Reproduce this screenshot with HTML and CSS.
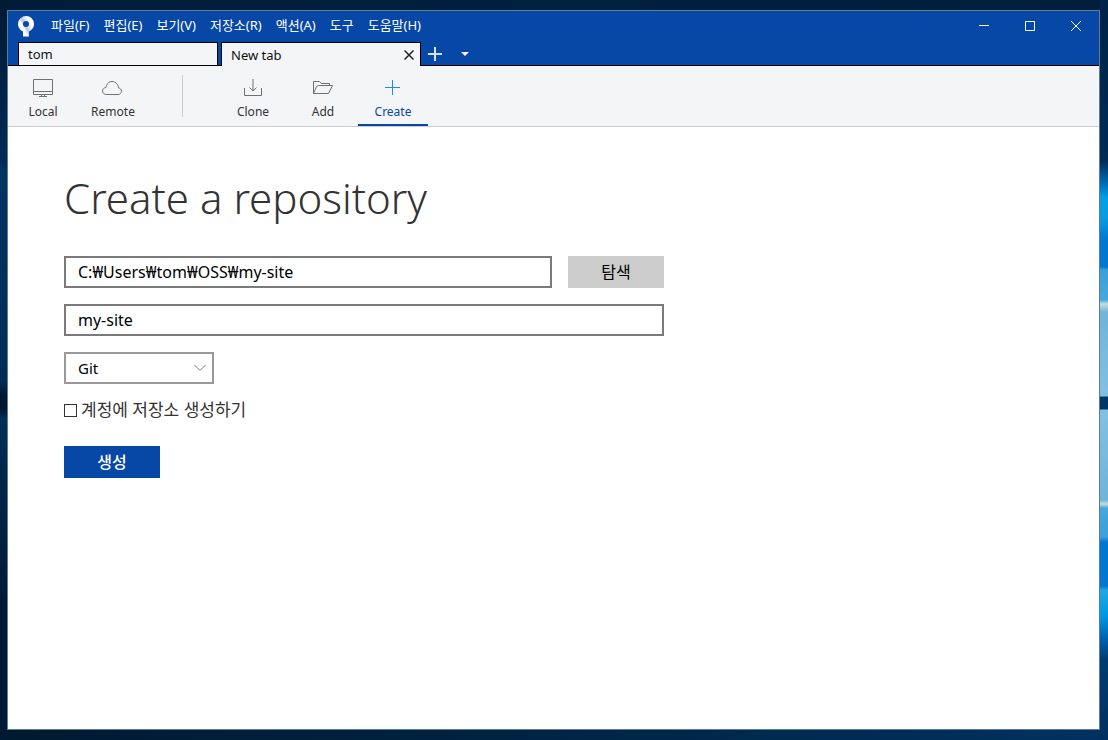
FILE: index.html
```
<!DOCTYPE html>
<html lang="ko">
<head>
    <meta charset="UTF-8">
    <meta name="viewport" content="width=device-width, initial-scale=1.0">
    <title>Create a repository</title>
    <link rel="stylesheet" href="styles.css">
</head>
<body>
    <div class="window">
        <header class="titlebar">
            <div class="menubar">
                <svg class="logo" width="16" height="21" viewBox="0 0 16 21">
                    <defs>
                        <linearGradient id="stem" x1="1" y1="0.4" x2="0.4" y2="0.8">
                            <stop offset="0.2" stop-color="#fff"/>
                            <stop offset="0.7" stop-color="#b4c6e6"/>
                            <stop offset="0.9" stop-color="#fff"/>
                        </linearGradient>
                    </defs>
                    <path fill="url(#stem)" fill-rule="evenodd" d="M8 0a8 8 0 0 1 8 8c0 3.400-2.200 6.300-5 7.400V20.500H5V15.400C2.200 14.300 0 11.400 0 8a8 8 0 0 1 8-8zM8 5a3 3 0 1 0 0 6a3 3 0 0 0 0-6z"/>
                </svg>
                <nav class="menu">
                    <button>파일(F)</button>
                    <button>편집(E)</button>
                    <button>보기(V)</button>
                    <button>저장소(R)</button>
                    <button>액션(A)</button>
                    <button>도구</button>
                    <button>도움말(H)</button>
                </nav>
                <div class="window-buttons">
                    <button aria-label="Minimize"><svg width="10" height="10"><path d="M0 4.500h10"/></svg></button>
                    <button aria-label="Maximize"><svg width="10" height="10"><path d="M.5.5h9v9h-9z"/></svg></button>
                    <button aria-label="Close"><svg width="10" height="10"><path d="M0 0l10 10M10 0L0 10"/></svg></button>
                </div>
            </div>
            <div class="tabs">
                <button class="tab">tom</button>
                <div class="tab active">
                    <button class="tab-title">New tab</button>
                    <button class="tab-close" aria-label="Close tab"><svg width="10" height="10"><path d="M.5.5l9 9M9.500.5l-9 9"/></svg></button>
                </div>
                <button class="tab-add" aria-label="Add tab"><svg width="14" height="14"><path d="M7 0v14M0 7h14"/></svg></button>
                <button class="tab-list" aria-label="Tab list"><svg width="8" height="4"><path d="M0 0h8L4 4z"/></svg></button>
            </div>
        </header>

        <div class="toolbar">
            <button class="tool">
                <svg width="22" height="20" viewBox="0 0 22 20"><path d="M1.500 1.500h19v15h-19zM1.500 13.500h19M9.500 16.500v2M12.500 16.500v2M7 18.500h8"/></svg>
                Local
            </button>
            <button class="tool">
                <svg width="22" height="20" viewBox="0 0 22 20"><path d="M4.500 16.500h11.500c2 0 3.500-1.400 3.500-3.300 0-1.800-1.300-3-3-3.200C16.500 6.500 13.500 3.500 10 3.500c-2.600 0-4.600 1.500-5.300 3.700-.6 1.100-.4 1.800-.7 2.300C2 9.700.5 11 .5 13s1.700 3.500 4 3.500z"/></svg>
                Remote
            </button>
            <div class="divider"></div>
            <button class="tool">
                <svg width="22" height="20" viewBox="0 0 22 20"><path d="M2.500 10v7.500h17V10M11 1v12M7.500 9.500L11 13l3.500-3.500"/></svg>
                Clone
            </button>
            <button class="tool">
                <svg width="22" height="20" viewBox="0 0 22 20"><path d="M1.500 15.500v-12h6l2 2h8v2M1.500 15.500h15l4-8h-14l-2 1z"/></svg>
                Add
            </button>
            <button class="tool selected">
                <svg width="22" height="20" viewBox="0 0 22 20"><path d="M10.500 2v15M3 9.500h15"/></svg>
                Create
            </button>
        </div>

        <main class="content">
            <h1>Create a repository</h1>
            <form class="create-form">
                <div class="path-row">
                    <input class="field" type="text" value="C:₩Users₩tom₩OSS₩my-site" aria-label="Destination path">
                    <button type="button" class="btn">탐색</button>
                </div>
                <input class="field" type="text" value="my-site" aria-label="Name">
                <div class="select-wrap">
                    <select class="field" aria-label="Repository type">
                        <option>Git</option>
                    </select>
                    <svg width="12" height="8"><path d="M.5 1L6 6.500 11.500 1"/></svg>
                </div>
                <div class="check-row">
                    <input type="checkbox" id="createRemote">
                    <label for="createRemote">계정에 저장소 생성하기</label>
                </div>
                <button type="button" class="btn primary">생성</button>
            </form>
        </main>
    </div>
</body>
</html>
```
FILE: styles.css
```
* {
    box-sizing: border-box;
}
body {
    margin: 0;
    min-height: 100vh;
    padding: 10px 8px 10px 7px;
    display: flex;
    font-family: "Noto Sans", "Noto Sans CJK KR", sans-serif;
    background:
        linear-gradient(#002346 0, #002b55 160px, #0070bd 185px, #00a0e6 198px, #0a9be0 218px, #0078d2 240px, #0078d2 267px, #3aa0d8 270px, #45a8dc 300px, #c8dcdc 304px, #70b4da 312px, #82c0e0 396px, #003668 397px, #003668 409px, #82c0e0 410px, #70b4da 500px, #c8dcdc 504px, #45a8dc 508px, #3aa0d8 537px, #0078d2 542px, #0078d2 586px, #20a8e0 590px, #0098e4 615px, #0060ac 640px, #003c70 660px, #003060 740px) right / 8px 100% no-repeat,
        linear-gradient(#001a35, #002a55 160px, #003463 170px, #002d57 380px, #001730 395px, #001730 408px, #002d57 418px, #001a36 600px, #001a36) left / 7px 100% no-repeat,
        linear-gradient(90deg, #001c38, #00203f 50%, #001e3c) top / 100% 10px no-repeat,
        linear-gradient(90deg, #001a30, #002444 50%, #003260) #002040;
}
button {
    border: none;
    background: none;
    padding: 0;
    margin: 0;
    font-family: inherit;
    color: inherit;
}
svg {
    display: block;
    fill: none;
    stroke: currentColor;
}
.window {
    flex: 1;
    display: flex;
    flex-direction: column;
    border: 1px solid #5d7d94;
    background: white;
}

/* title bar */
.titlebar {
    background: #0747a6;
    color: white;
}
.menubar {
    display: flex;
    align-items: flex-start;
    height: 31px;
    padding-left: 10px;
}
.logo {
    margin-top: 5px;
    stroke: none;
}
.menu {
    display: flex;
    gap: 14px;
    margin-left: 17px;
}
.menu button {
    font-size: 13px;
    line-height: 28px;
    white-space: nowrap;
}
.window-buttons {
    display: flex;
    margin-left: auto;
}
.window-buttons button {
    width: 46px;
    height: 30px;
    display: flex;
    align-items: center;
    justify-content: center;
}
.tabs {
    display: flex;
    height: 24px;
    padding-left: 10px;
    box-shadow: inset 0 -1px black;
}
.tab {
    width: 200px;
    margin-right: 3px;
    padding: 0 9px;
    border: 1px solid black;
    background: #f4f5f7;
    color: #111;
    font-size: 13px;
    line-height: 22px;
    text-align: left;
}
.tab.active {
    display: flex;
    align-items: center;
    justify-content: space-between;
    border-bottom: none;
    padding-right: 6px;
    margin-right: 0;
}
.tab-title {
    font-size: 13px;
    line-height: 22px;
}
.tab-close svg {
    stroke: #222;
    stroke-width: 1.5;
}
.tab-add {
    margin-left: 7px;
}
.tab-add svg {
    stroke: #d5e0f2;
    stroke-width: 2;
}
.tab-list {
    margin-left: 19px;
}
.tab-list svg {
    fill: white;
    stroke: none;
}

/* toolbar */
.toolbar {
    display: flex;
    height: 61px;
    background: #f4f5f7;
    border-bottom: 1px solid #ccc;
}
.tool {
    width: 70px;
    display: flex;
    flex-direction: column;
    align-items: center;
    padding-top: 12px;
    font-size: 12px;
    line-height: 16px;
    color: #333;
    border-bottom: 2px solid transparent;
}
.tool svg {
    margin-bottom: 6px;
    stroke: #707070;
}
.tool.selected {
    color: #0747a6;
    border-bottom-color: #0747a6;
}
.tool.selected svg {
    stroke: #1e88f5;
}
.divider {
    width: 1px;
    height: 42px;
    margin: 9px 35px 0 34px;
    background: #ccc;
}

/* form */
.content {
    padding: 39px 56px;
}
h1 {
    margin: 0 0 26px;
    font-size: 42px;
    font-weight: 300;
    line-height: 64px;
    color: #333;
}
.create-form {
    max-width: 600px;
    display: flex;
    flex-direction: column;
    align-items: flex-start;
    gap: 16px;
}
.path-row {
    display: flex;
    gap: 16px;
    width: 100%;
}
.field {
    width: 100%;
    height: 32px;
    padding: 0 12px;
    border: 2px solid #7a7a7a;
    border-radius: 0;
    background: white;
    color: black;
    font-family: inherit;
    font-size: 16px;
}
.btn {
    flex: none;
    width: 96px;
    height: 32px;
    background: #ccc;
    color: black;
    font-size: 16px;
    line-height: 30px;
}
.select-wrap {
    position: relative;
    width: 150px;
}
.select-wrap .field {
    display: block;
    appearance: none;
    border-color: #999;
    font-size: 15px;
}
.select-wrap svg {
    position: absolute;
    right: 8px;
    top: 12px;
    stroke: #777;
    pointer-events: none;
}
.check-row {
    display: flex;
    align-items: center;
    gap: 4px;
    padding-bottom: 10px;
    color: #333;
    font-size: 17px;
    line-height: 20px;
}
.check-row input {
    appearance: none;
    width: 13px;
    height: 13px;
    margin: 0;
    border: 1px solid #333;
    background: white;
}
.primary {
    background: #0747a6;
    color: white;
    font-weight: 500;
}
```
